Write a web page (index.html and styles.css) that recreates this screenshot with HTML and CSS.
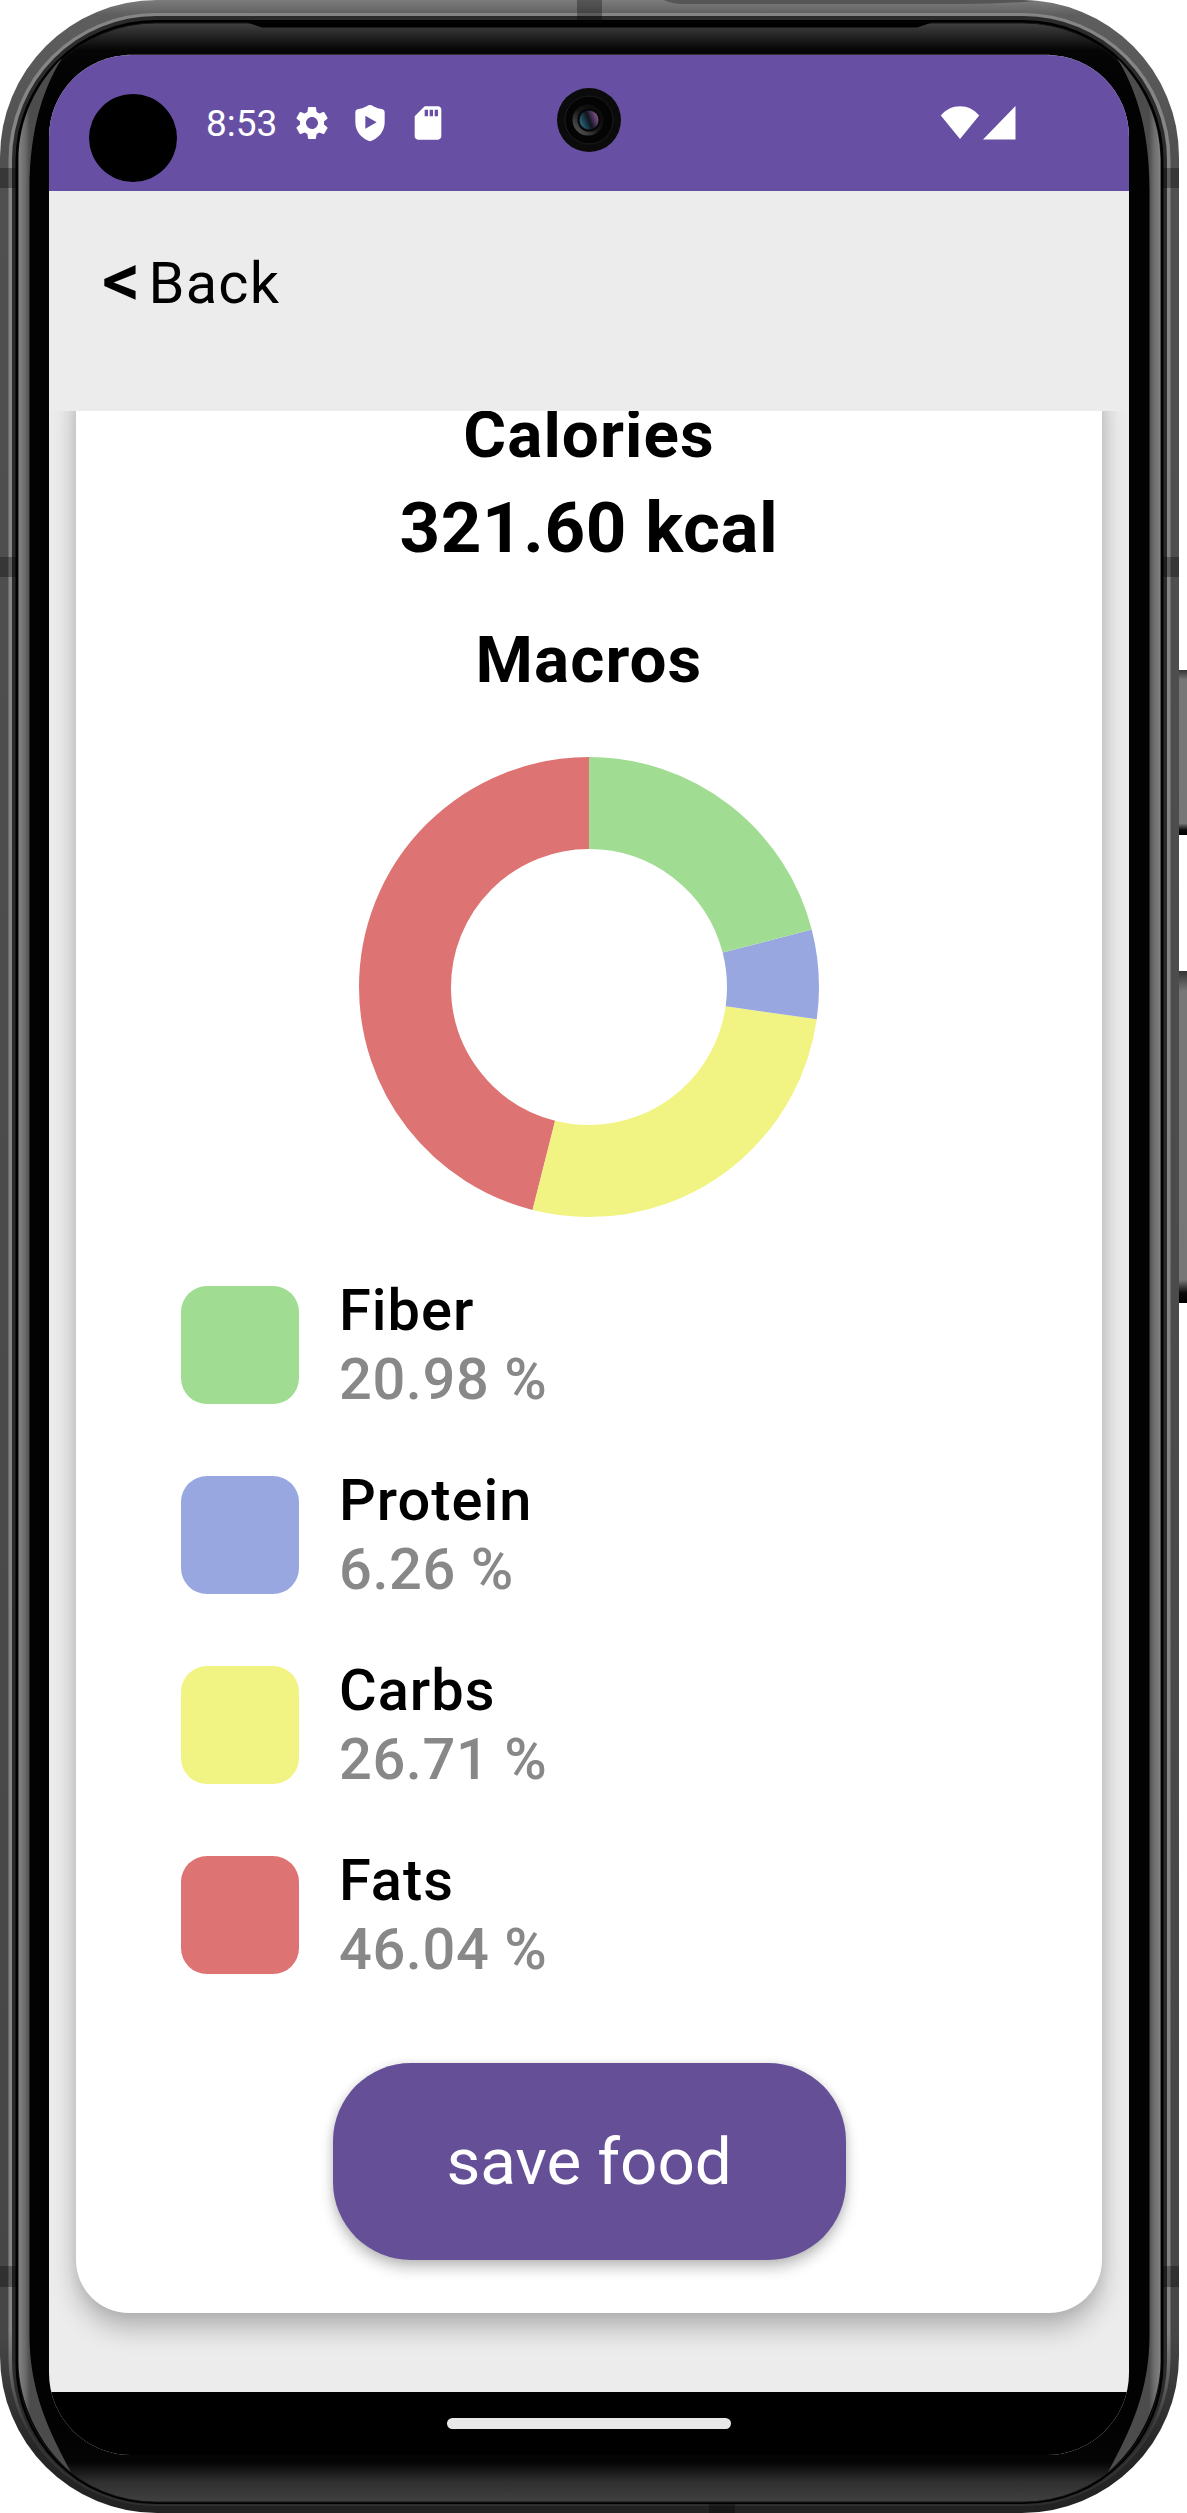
FILE: index.html
```html
<!DOCTYPE html>
<html lang="en">
<head>
<meta charset="utf-8">
<title>Food details</title>
<link rel="stylesheet" href="styles.css">
</head>
<body>
<div class="phone">
  <svg class="frame" viewBox="0 0 1187 2513" aria-hidden="true">
    <defs>
      <linearGradient id="shell" x1="0" y1="0" x2="0" y2="1">
        <stop offset="0" stop-color="#7c7c7c"/><stop offset=".006" stop-color="#5e5e5e"/><stop offset=".06" stop-color="#505050"/>
        <stop offset=".93" stop-color="#464646"/><stop offset=".975" stop-color="#262626"/><stop offset="1" stop-color="#222"/>
      </linearGradient>
      <linearGradient id="rim" x1="0" y1="0" x2="0" y2="1">
        <stop offset="0" stop-color="#858585"/><stop offset=".93" stop-color="#858585"/><stop offset=".97" stop-color="#363636"/><stop offset="1" stop-color="#303030"/>
      </linearGradient>
      <linearGradient id="glass" gradientUnits="userSpaceOnUse" x1="0" y1="23" x2="0" y2="2502">
        <stop offset="0" stop-color="#404040"/><stop offset=".005" stop-color="#252525"/><stop offset=".011" stop-color="#050505"/>
        <stop offset=".03" stop-color="#020202"/><stop offset=".97" stop-color="#020202"/><stop offset=".984" stop-color="#050505"/>
        <stop offset=".992" stop-color="#303030"/><stop offset="1" stop-color="#404040"/>
      </linearGradient>
      <linearGradient id="edge" gradientUnits="userSpaceOnUse" x1="18" y1="0" x2="30" y2="0">
        <stop offset="0" stop-color="#858585"/><stop offset=".6" stop-color="#6c6c6c"/><stop offset="1" stop-color="#4c4c4c"/>
      </linearGradient>
      <linearGradient id="key" x1="0" y1="0" x2="0" y2="1">
        <stop offset="0" stop-color="#333"/><stop offset=".06" stop-color="#777"/><stop offset=".93" stop-color="#777"/><stop offset=".97" stop-color="#0a0a0a"/><stop offset="1" stop-color="#000"/>
      </linearGradient>
    </defs>
    <rect x="1176" y="670" width="14" height="165" rx="3" fill="url(#key)"/>
    <rect x="1176" y="971" width="14" height="332" rx="3" fill="url(#key)"/>
    <rect width="1179" height="2513" rx="157" fill="url(#shell)"/>
    <path d="M664 0H1021L1036 1Q1000 4 960 4H680Q670 3 664 0Z" fill="#555"/>
    <rect x="8.500" y="13" width="1162" height="2493" rx="147" fill="url(#rim)"/>
    <rect x="12" y="16" width="1155" height="2489" rx="144" fill="#2b2b2b"/>
    <g fill="#000" opacity=".3">
      <path d="M577 0h25v20h-25zM709 2504h26v9h-26zM0 168h17v20H0zM0 557h17v20H0zM0 2266h17v21H0zM1162 168h17v20h-17zM1162 557h17v20h-17zM1162 2266h17v21h-17z"/>
    </g>
    <rect x="15.500" y="20" width="1148" height="2484" rx="140" fill="#000"/>
    <rect x="18.500" y="23" width="1142" height="2479" rx="137" fill="url(#glass)" stroke="#161616"/>
    <path d="M247 22.500L262 27.500H917L932 22.500Z" fill="#000"/>
    <g id="side-edge">
      <path d="M18.500 2362V160C18.500 120 36 84 62 58C45 86 29.500 125 29.500 190V2335C29.500 2390 48 2430 71 2472C38 2445 18.500 2400 18.500 2362Z" fill="url(#edge)"/>
    </g>
    <use href="#side-edge" transform="translate(1179 0) scale(-1 1)"/>
    <path d="M127 54.500H1050" stroke="#333"/>
  </svg>

  <main class="screen">
    <div class="status">
      <span class="punch"></span>
      <span class="time">8:53</span>
      <svg class="ico" viewBox="0 0 24 24"><path d="M19.140 12.940c.04-.3.060-.61.060-.94s-.02-.64-.07-.94l2.030-1.580a.49.490 0 0 0 .12-.61l-1.920-3.320a.488.488 0 0 0-.59-.22l-2.390.96c-.5-.38-1.030-.7-1.620-.94l-.36-2.540a.484.484 0 0 0-.48-.41h-3.840a.47.470 0 0 0-.47.410l-.36 2.540c-.59.240-1.130.570-1.620.940l-2.390-.96a.47.470 0 0 0-.59.220L2.740 8.870c-.12.210-.08.470.120.610l2.030 1.580c-.05.300-.09.630-.09.940s.02.640.070.940l-2.030 1.580a.49.490 0 0 0-.12.610l1.920 3.320c.12.220.370.290.590.220l2.390-.96c.5.380 1.030.700 1.620.940l.36 2.540c.05.240.240.410.480.410h3.840c.24 0 .44-.17.470-.41l.36-2.540c.59-.24 1.130-.56 1.620-.94l2.390.96c.22.080.470 0 .59-.22l1.920-3.320a.47.470 0 0 0-.12-.61l-2.010-1.580zM12 15.600A3.610 3.610 0 0 1 8.400 12c0-1.980 1.620-3.600 3.600-3.600s3.600 1.620 3.600 3.600-1.620 3.600-3.600 3.600z"/></svg>
      <svg class="ico" viewBox="0 0 24 24"><path fill-rule="evenodd" d="M12 1.200Q13 1.200 14 1.900Q16.500 3.300 19.500 3.800Q20.800 4.200 20.800 5.400V11.500C20.800 17.500 16.500 21.500 12 22.900C7.500 21.500 3.200 17.500 3.200 11.500V5.400Q3.200 4.200 4.500 3.800Q7.500 3.300 10 1.900Q11 1.200 12 1.200ZM9.200 7.600V15.400L16 11.500Z"/></svg>
      <svg class="ico" viewBox="0 0 24 24"><path d="M18 2h-8L4.020 8 4 20c0 1.100.9 2 2 2h12c1.100 0 2-.9 2-2V4c0-1.100-.9-2-2-2zm-6 6h-2V4h2v4zm3 0h-2V4h2v4zm3 0h-2V4h2v4z"/></svg>
      <svg class="camera" viewBox="0 0 64 64">
        <defs>
          <linearGradient id="lens" x1="0" y1=".7" x2="1" y2=".3"><stop offset="0" stop-color="#2b6e82"/><stop offset=".5" stop-color="#10141f"/><stop offset="1" stop-color="#8a5a93"/></linearGradient>
          <linearGradient id="ring" x1="0" y1="1" x2="1" y2="0"><stop offset="0" stop-color="#666"/><stop offset=".5" stop-color="#161616"/><stop offset="1" stop-color="#050505"/></linearGradient>
        </defs>
        <circle cx="32" cy="32" r="32" fill="#0b0b0b"/>
        <circle cx="32" cy="32" r="24" fill="#040404" stroke="#1b1b1b"/>
        <circle cx="31" cy="32" r="15.500" fill="url(#ring)"/>
        <circle cx="32" cy="32" r="11.500" fill="#070707"/>
        <circle cx="32" cy="32" r="9.500" fill="url(#lens)"/>
      </svg>
      <svg class="signals" viewBox="0 0 76 34">
        <path d="M.8 9.500C10.500-3 29.500-3 39.200 9.500L20 33ZM75.500 0V33.500H43Z"/>
      </svg>
    </div>

    <header class="header"><span class="chevron">&lt;</span><span class="back">Back</span></header>

    <div class="scroll">
      <section class="card">
        <h2 class="title">Calories</h2>
        <p class="kcal">321.60 kcal</p>
        <h2 class="title macros">Macros</h2>
        <svg class="donut" viewBox="0 0 460 460">
          <g fill="none" stroke-width="92" transform="rotate(-90 230 230)">
            <circle cx="230" cy="230" r="184" pathLength="100" stroke="#dd7373" stroke-dasharray="46.050 100" stroke-dashoffset="-53.950"/>
            <circle cx="230" cy="230" r="184" pathLength="100" stroke="#f1f383" stroke-dasharray="26.710 100" stroke-dashoffset="-27.240"/>
            <circle cx="230" cy="230" r="184" pathLength="100" stroke="#98a7e0" stroke-dasharray="6.260 100" stroke-dashoffset="-20.980"/>
            <circle cx="230" cy="230" r="184" pathLength="100" stroke="#a0dc92" stroke-dasharray="20.980 100"/>
          </g>
        </svg>
        <ul class="legend">
          <li><i class="swatch fiber"></i><div><b>Fiber</b><span>20.98 %</span></div></li>
          <li><i class="swatch protein"></i><div><b>Protein</b><span>6.26 %</span></div></li>
          <li><i class="swatch carbs"></i><div><b>Carbs</b><span>26.71 %</span></div></li>
          <li><i class="swatch fats"></i><div><b>Fats</b><span>46.04 %</span></div></li>
        </ul>
        <button class="save">save food</button>
      </section>
    </div>
    <div class="nav"><span class="pill"></span></div>
  </main>
</div>
</body>
</html>
```
FILE: styles.css
```css
* { box-sizing: border-box; }
body { margin: 0; background: #fff; font-family: Roboto, sans-serif; color: #000; }
h2, p, ul { margin: 0; padding: 0; }

.phone { position: relative; width: 1187px; height: 2513px; padding: 55px 58px 58px 49px; overflow: hidden; }
.frame { position: absolute; left: 0; top: 0; width: 1187px; height: 2513px; }

.screen {
  position: relative; width: 1080px; height: 2400px; border-radius: 82px;
  overflow: hidden; background: #ececec; display: flex; flex-direction: column;
}

.status {
  position: relative; flex: none; height: 136px; background: #6750a4; color: #fff;
  display: flex; align-items: center; padding: 0 113px 0 157px;
}
.punch { position: absolute; left: 40px; top: 39px; width: 88px; height: 88px; border-radius: 50%; background: #000; }
.camera { position: absolute; left: 508px; top: 33px; width: 64px; height: 64px; }
.time { font-size: 37px; line-height: 44px; width: 86px; padding-top: 2px; }
.ico { width: 40px; height: 40px; fill: #fff; margin-right: 18px; }
.signals { width: 76px; height: 34px; fill: #fff; margin-left: auto; }

.header { flex: none; height: 220px; padding: 58px 0 0 53px; display: flex; font-size: 57.75px; line-height: 68px; }
.chevron { width: 46.5px; font-size: 76px; line-height: 62px; font-weight: 500; }
.back { letter-spacing: 1.2px; }

.scroll { flex: none; height: 1981px; overflow: hidden; padding: 0 27px; }
.card {
  margin-top: -60px; height: 1962px; padding: 45px 0 0; background: #fff; border-radius: 53px;
  box-shadow: 0 16px 26px rgba(0,0,0,.23), 0 0 16px rgba(0,0,0,.09);
  display: flex; flex-direction: column; align-items: center;
}
.title { font-size: 65.6px; line-height: 77px; font-weight: 700; letter-spacing: 1.05px; }
.kcal { margin-top: 13px; font-size: 70.9px; line-height: 83px; font-weight: 700; letter-spacing: .6px; }
.macros { margin-top: 52px; }
.donut { flex: none; width: 460px; height: 460px; margin-top: 59px; }

.legend { align-self: stretch; list-style: none; margin: 59px 0 0 105px; display: flex; flex-direction: column; gap: 52px; }
.legend li { display: flex; align-items: center; gap: 40px; height: 138px; }
.legend div { display: flex; flex-direction: column; font-size: 57.75px; line-height: 69px; font-weight: 500; letter-spacing: 1px; }
.legend b { font-weight: 500; }
.legend span { color: #888; letter-spacing: .6px; }
.swatch { width: 118px; height: 118px; border-radius: 26px; }
.fiber { background: #a0dc92; }
.protein { background: #98a7e0; }
.carbs { background: #f1f383; }
.fats { background: #dd7373; }

.save {
  flex: none; margin-top: 79px; width: 513px; height: 197px; padding: 0; border: 0; border-radius: 78px;
  background: #655097; color: #fff; font: 400 65.6px/77px Roboto, sans-serif; letter-spacing: -.1px;
  box-shadow: 0 8px 14px rgba(0,0,0,.24), 0 0 8px rgba(0,0,0,.09);
}

.nav { flex: 1; background: #000; display: flex; justify-content: center; padding-top: 26px; }
.pill { width: 284px; height: 11px; border-radius: 6px; background: #e8e8e8; }
```
